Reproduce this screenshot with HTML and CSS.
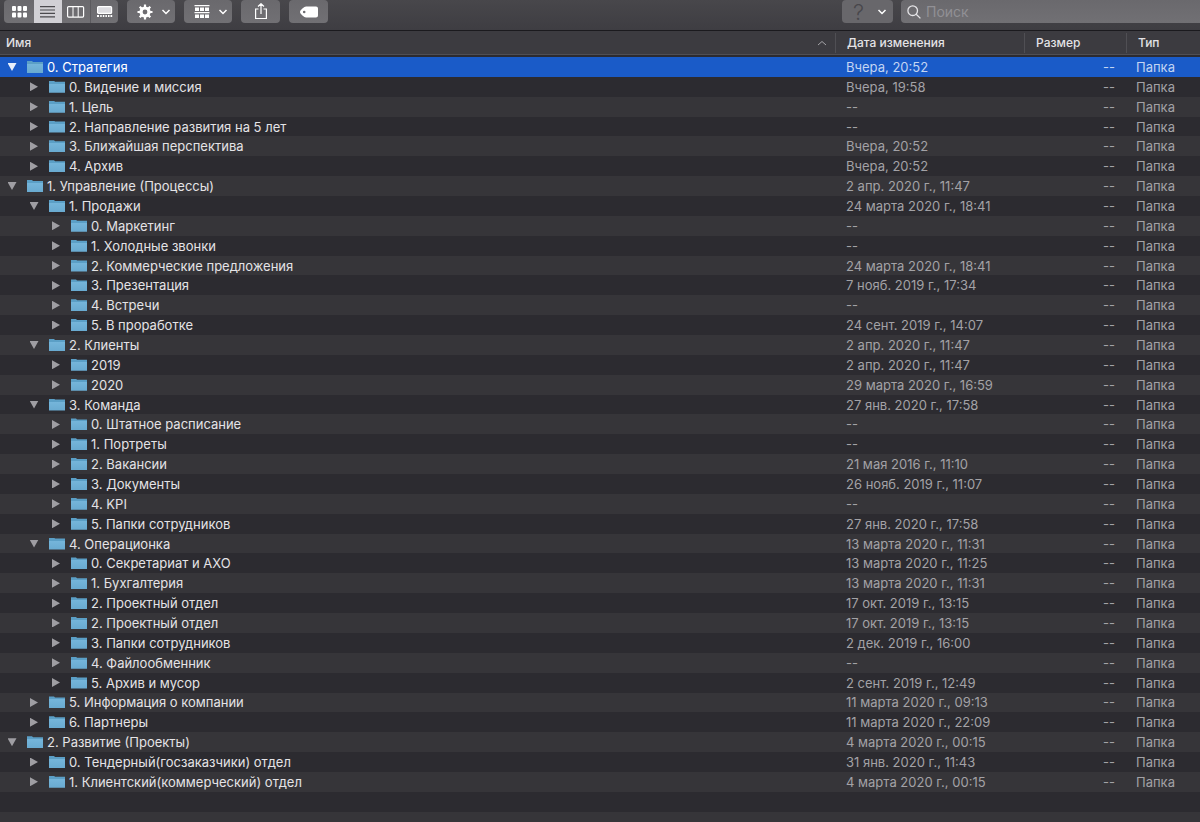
FILE: index.html
```html
<!DOCTYPE html>
<html lang="ru">
<head>
<meta charset="utf-8">
<title>Стратегия</title>
<link rel="stylesheet" href="styles.css">
</head>
<body>
<header class="toolbar">
  <div class="group views">
    <button class="view" aria-label="Значки"><svg width="15" height="12" viewBox="0 0 15 12" fill="#fff"><rect x="0" y="0" width="4" height="5" rx="1"/><rect x="5.500" y="0" width="4" height="5" rx="1"/><rect x="11" y="0" width="4" height="5" rx="1"/><rect x="0" y="6.500" width="4" height="5" rx="1"/><rect x="5.500" y="6.500" width="4" height="5" rx="1"/><rect x="11" y="6.500" width="4" height="5" rx="1"/></svg></button>
    <button class="view active" aria-label="Список" aria-pressed="true"><svg width="16" height="12" viewBox="0 0 16 12" stroke="#4b4a4e" stroke-width="1.200"><path d="M0 .7h15M0 4h15M0 7.400h15M0 10.800h15"/></svg></button>
    <button class="view" aria-label="Колонки"><svg width="18" height="12" viewBox="0 0 18 12" fill="none" stroke="#fff"><rect x=".6" y=".6" width="16" height="10.500" rx="1" stroke-width="1.200"/><path d="M6 1v10M11.200 1v10"/></svg></button>
    <button class="view" aria-label="Галерея"><svg width="16" height="12" viewBox="0 0 16 12" fill="#fff"><rect x=".6" y=".6" width="14" height="6.800" rx="1" fill="#dddce0" stroke="#fff" stroke-width="1.200"/><path d="M0 9h2v2H0zM3.200 9h1.500v2H3.200zM5.800 9h1.500v2H5.800zM8.400 9h1.500v2H8.400zM11 9h1.500v2H11zM13.500 9h1.700v2h-1.700z"/></svg></button>
  </div>
  <button class="group menu" aria-label="Действия"><svg width="16" height="16" viewBox="-8 -8 16 16"><circle r="4" fill="none" stroke="#fff" stroke-width="3.200"/><path d="M0-7.500v3M0 7.500v-3M-7.500 0h3M7.500 0h-3M-5.300-5.300l2.200 2.200M5.300 5.300l-2.200-2.200M-5.300 5.300l2.200-2.200M5.300-5.300l-2.200 2.200" stroke="#fff" stroke-width="2.200"/></svg><svg width="10" height="6" viewBox="0 0 10 6"><path d="M1.500 1l3.500 3.500L8.500 1" class="chevron"/></svg></button>
  <button class="group menu" aria-label="Группировка"><svg width="16" height="16" viewBox="0 0 16 16" fill="#fff"><path d="M.5 1h15v1.200H.5zM.5 8h15v1.200H.5z"/><path d="M1 3.500h4v3.500H1zM6 3.500h4v3.500H6zM11 3.500h4v3.500h-4zM1 10.500h4V14H1zM6 10.500h4V14H6zM11 10.500h4V14h-4z"/></svg><svg width="10" height="6" viewBox="0 0 10 6"><path d="M1.500 1l3.500 3.500L8.500 1" class="chevron"/></svg></button>
  <button class="group single" aria-label="Поделиться"><svg width="14" height="18" viewBox="0 1 14 18" fill="none" stroke="#fff" stroke-width="1.200"><path d="M4.500 7H1.600v9.500h10.800V7H9.500M7 12V2M4 4.500L7 1.700l3 2.800"/></svg></button>
  <button class="group single" aria-label="Теги"><svg width="18" height="12" viewBox="0 0 18 12"><path fill="#fff" fill-rule="evenodd" d="M6 .5h10a2 2 0 0 1 2 2v7a2 2 0 0 1-2 2H6C4.500 11.500 0 8 0 6S4.500.5 6 .5zM4.200 4.700a1.300 1.300 0 1 0 0 2.600 1.300 1.300 0 0 0 0-2.600z"/></svg></button>
  <button class="group menu help" aria-label="Справка"><span class="question">?</span><svg width="10" height="6" viewBox="0 0 10 6"><path d="M1.500 1l3.500 3.500L8.500 1" class="chevron"/></svg></button>
  <label class="search"><svg width="14" height="14" viewBox="0 0 14 14" fill="none" stroke="#e6e5e8" stroke-width="1.300"><circle cx="5.700" cy="5.700" r="4.800"/><path d="M9.200 9.200l4.200 4.200"/></svg><input type="search" placeholder="Поиск" aria-label="Поиск"></label>
</header>
<main class="list">
<table class="files">
<colgroup><col><col class="col-date"><col class="col-size"><col class="col-type"></colgroup>
<thead><tr><th class="sorted" aria-sort="ascending"><div class="head">Имя<svg width="10" height="6" viewBox="0 0 10 6" fill="none" stroke="#a5a4a8"><path d="M1 5l4-3.500L9 5"/></svg></div></th><th><div class="head">Дата изменения</div></th><th><div class="head">Размер</div></th><th><div class="head">Тип</div></th></tr></thead>
<tbody>
<tr class="selected"><td><div class="name"><button class="toggle open" aria-label="Свернуть"></button><i class="folder"></i>0. Стратегия</div></td><td>Вчера, 20:52</td><td>--</td><td>Папка</td></tr>
<tr><td><div class="name l1"><button class="toggle" aria-label="Развернуть"></button><i class="folder"></i>0. Видение и миссия</div></td><td>Вчера, 19:58</td><td>--</td><td>Папка</td></tr>
<tr><td><div class="name l1"><button class="toggle" aria-label="Развернуть"></button><i class="folder"></i>1. Цель</div></td><td>--</td><td>--</td><td>Папка</td></tr>
<tr><td><div class="name l1"><button class="toggle" aria-label="Развернуть"></button><i class="folder"></i>2. Направление развития на 5 лет</div></td><td>--</td><td>--</td><td>Папка</td></tr>
<tr><td><div class="name l1"><button class="toggle" aria-label="Развернуть"></button><i class="folder"></i>3. Ближайшая перспектива</div></td><td>Вчера, 20:52</td><td>--</td><td>Папка</td></tr>
<tr><td><div class="name l1"><button class="toggle" aria-label="Развернуть"></button><i class="folder"></i>4. Архив</div></td><td>Вчера, 20:52</td><td>--</td><td>Папка</td></tr>
<tr><td><div class="name"><button class="toggle open" aria-label="Свернуть"></button><i class="folder"></i>1. Управление (Процессы)</div></td><td>2 апр. 2020 г., 11:47</td><td>--</td><td>Папка</td></tr>
<tr><td><div class="name l1"><button class="toggle open" aria-label="Свернуть"></button><i class="folder"></i>1. Продажи</div></td><td>24 марта 2020 г., 18:41</td><td>--</td><td>Папка</td></tr>
<tr><td><div class="name l2"><button class="toggle" aria-label="Развернуть"></button><i class="folder"></i>0. Маркетинг</div></td><td>--</td><td>--</td><td>Папка</td></tr>
<tr><td><div class="name l2"><button class="toggle" aria-label="Развернуть"></button><i class="folder"></i>1. Холодные звонки</div></td><td>--</td><td>--</td><td>Папка</td></tr>
<tr><td><div class="name l2"><button class="toggle" aria-label="Развернуть"></button><i class="folder"></i>2. Коммерческие предложения</div></td><td>24 марта 2020 г., 18:41</td><td>--</td><td>Папка</td></tr>
<tr><td><div class="name l2"><button class="toggle" aria-label="Развернуть"></button><i class="folder"></i>3. Презентация</div></td><td>7 нояб. 2019 г., 17:34</td><td>--</td><td>Папка</td></tr>
<tr><td><div class="name l2"><button class="toggle" aria-label="Развернуть"></button><i class="folder"></i>4. Встречи</div></td><td>--</td><td>--</td><td>Папка</td></tr>
<tr><td><div class="name l2"><button class="toggle" aria-label="Развернуть"></button><i class="folder"></i>5. В проработке</div></td><td>24 сент. 2019 г., 14:07</td><td>--</td><td>Папка</td></tr>
<tr><td><div class="name l1"><button class="toggle open" aria-label="Свернуть"></button><i class="folder"></i>2. Клиенты</div></td><td>2 апр. 2020 г., 11:47</td><td>--</td><td>Папка</td></tr>
<tr><td><div class="name l2"><button class="toggle" aria-label="Развернуть"></button><i class="folder"></i>2019</div></td><td>2 апр. 2020 г., 11:47</td><td>--</td><td>Папка</td></tr>
<tr><td><div class="name l2"><button class="toggle" aria-label="Развернуть"></button><i class="folder"></i>2020</div></td><td>29 марта 2020 г., 16:59</td><td>--</td><td>Папка</td></tr>
<tr><td><div class="name l1"><button class="toggle open" aria-label="Свернуть"></button><i class="folder"></i>3. Команда</div></td><td>27 янв. 2020 г., 17:58</td><td>--</td><td>Папка</td></tr>
<tr><td><div class="name l2"><button class="toggle" aria-label="Развернуть"></button><i class="folder"></i>0. Штатное расписание</div></td><td>--</td><td>--</td><td>Папка</td></tr>
<tr><td><div class="name l2"><button class="toggle" aria-label="Развернуть"></button><i class="folder"></i>1. Портреты</div></td><td>--</td><td>--</td><td>Папка</td></tr>
<tr><td><div class="name l2"><button class="toggle" aria-label="Развернуть"></button><i class="folder"></i>2. Вакансии</div></td><td>21 мая 2016 г., 11:10</td><td>--</td><td>Папка</td></tr>
<tr><td><div class="name l2"><button class="toggle" aria-label="Развернуть"></button><i class="folder"></i>3. Документы</div></td><td>26 нояб. 2019 г., 11:07</td><td>--</td><td>Папка</td></tr>
<tr><td><div class="name l2"><button class="toggle" aria-label="Развернуть"></button><i class="folder"></i>4. KPI</div></td><td>--</td><td>--</td><td>Папка</td></tr>
<tr><td><div class="name l2"><button class="toggle" aria-label="Развернуть"></button><i class="folder"></i>5. Папки сотрудников</div></td><td>27 янв. 2020 г., 17:58</td><td>--</td><td>Папка</td></tr>
<tr><td><div class="name l1"><button class="toggle open" aria-label="Свернуть"></button><i class="folder"></i>4. Операционка</div></td><td>13 марта 2020 г., 11:31</td><td>--</td><td>Папка</td></tr>
<tr><td><div class="name l2"><button class="toggle" aria-label="Развернуть"></button><i class="folder"></i>0. Секретариат и АХО</div></td><td>13 марта 2020 г., 11:25</td><td>--</td><td>Папка</td></tr>
<tr><td><div class="name l2"><button class="toggle" aria-label="Развернуть"></button><i class="folder"></i>1. Бухгалтерия</div></td><td>13 марта 2020 г., 11:31</td><td>--</td><td>Папка</td></tr>
<tr><td><div class="name l2"><button class="toggle" aria-label="Развернуть"></button><i class="folder"></i>2. Проектный отдел</div></td><td>17 окт. 2019 г., 13:15</td><td>--</td><td>Папка</td></tr>
<tr><td><div class="name l2"><button class="toggle" aria-label="Развернуть"></button><i class="folder"></i>2. Проектный отдел</div></td><td>17 окт. 2019 г., 13:15</td><td>--</td><td>Папка</td></tr>
<tr><td><div class="name l2"><button class="toggle" aria-label="Развернуть"></button><i class="folder"></i>3. Папки сотрудников</div></td><td>2 дек. 2019 г., 16:00</td><td>--</td><td>Папка</td></tr>
<tr><td><div class="name l2"><button class="toggle" aria-label="Развернуть"></button><i class="folder"></i>4. Файлообменник</div></td><td>--</td><td>--</td><td>Папка</td></tr>
<tr><td><div class="name l2"><button class="toggle" aria-label="Развернуть"></button><i class="folder"></i>5. Архив и мусор</div></td><td>2 сент. 2019 г., 12:49</td><td>--</td><td>Папка</td></tr>
<tr><td><div class="name l1"><button class="toggle" aria-label="Развернуть"></button><i class="folder"></i>5. Информация о компании</div></td><td>11 марта 2020 г., 09:13</td><td>--</td><td>Папка</td></tr>
<tr><td><div class="name l1"><button class="toggle" aria-label="Развернуть"></button><i class="folder"></i>6. Партнеры</div></td><td>11 марта 2020 г., 22:09</td><td>--</td><td>Папка</td></tr>
<tr><td><div class="name"><button class="toggle open" aria-label="Свернуть"></button><i class="folder"></i>2. Развитие (Проекты)</div></td><td>4 марта 2020 г., 00:15</td><td>--</td><td>Папка</td></tr>
<tr><td><div class="name l1"><button class="toggle" aria-label="Развернуть"></button><i class="folder"></i>0. Тендерный(госзаказчики) отдел</div></td><td>31 янв. 2020 г., 11:43</td><td>--</td><td>Папка</td></tr>
<tr><td><div class="name l1"><button class="toggle" aria-label="Развернуть"></button><i class="folder"></i>1. Клиентский(коммерческий) отдел</div></td><td>4 марта 2020 г., 00:15</td><td>--</td><td>Папка</td></tr>
<tr class="blank"><td colspan="4"><div class="name empty"></div></td></tr>
</tbody>
</table>
</main>
<footer class="tail"></footer>
</body>
</html>
```
FILE: styles.css
```css
* { box-sizing: border-box; }

body {
  margin: 0;
  min-height: 100vh;
  display: flex;
  flex-direction: column;
  background: #2c2b30;
  color: #e4e3e6;
  font: 13px/18px Inter, "Noto Sans", sans-serif;
}

button {
  border: 0;
  padding: 0;
  background: none;
  color: inherit;
  font: inherit;
}

/* Toolbar */
.toolbar {
  display: flex;
  align-items: flex-start;
  gap: 9px;
  height: 31px;
  padding-left: 4px;
  background: linear-gradient(#48474b, #3e3d42);
  border-bottom: 1px solid #1b1a1e;
}

.group {
  display: flex;
  align-items: center;
  justify-content: center;
  height: 23px;
  border-radius: 4px;
  background: linear-gradient(#6a696d, #717074);
}

.views { overflow: hidden; }

.view {
  display: flex;
  align-items: center;
  justify-content: center;
  width: 28px;
  height: 23px;
}

.view:first-child { width: 30px; }
.view + .view { border-left: 1px solid #5b5a5e; }
.view.active, .view.active + .view { border-left: 0; }
.view.active { background: #d1d0d5; }

.menu { width: 48px; padding-left: 5px; gap: 8px; }

.single { width: 39px; }

.chevron { fill: none; stroke: #fff; stroke-width: 1.5px; }

.help { width: 51px; margin-left: auto; gap: 13px; background: #68676b; }

.question { color: #48474c; font-size: 22px; font-weight: 300; }

.search {
  display: flex;
  align-items: center;
  gap: 5px;
  width: 25%;
  height: 23px;
  margin-left: -1px;
  padding-left: 6px;
  border-radius: 4px 0 0 4px;
  background: linear-gradient(#6a696d, #717074);
}

.search input {
  flex: 1;
  min-width: 0;
  border: 0;
  padding: 0;
  outline: 0;
  background: none;
  color: #fff;
  font: inherit;
  font-size: 14px;
}

.search input::placeholder { color: #919095; }

/* File list */
.list { flex: 1; display: grid; }

.files {
  width: 100%;
  height: 100%;
  table-layout: fixed;
  border-collapse: separate;
  border-spacing: 0;
}

.col-date { width: 189px; }
.col-size { width: 102px; }
.col-type { width: 74px; }

th {
  height: 26px;
  padding: 0 0 2px;
  text-align: left;
  font-size: 12px;
  font-weight: 500;
  background: linear-gradient(#3c3b40 23px, #504f54 23px, #504f54 24px, #2c2b30 24px);
}

.head {
  display: flex;
  align-items: center;
  justify-content: space-between;
  height: 20px;
  padding: 0 8px 0 11px;
  border-left: 1px solid #504f54;
}

.sorted .head { padding-left: 6px; border-left: 0; }

tbody tr:nth-child(odd), .tail { background: #363539; }

td {
  padding: 0 10px;
  white-space: nowrap;
  color: #a3a2a6;
  line-height: 18px;
}

td:first-child { padding: 0 0 0 4px; color: #e4e3e6; }
td:nth-child(2) { padding-left: 11px; }
td:nth-child(3) { padding-right: 11px; text-align: right; }

tbody tr.selected:nth-child(n) { background: #1a5bc8; }
.selected td { color: #c3d5f3; }
.selected td:first-child { color: #fff; }

.name { display: flex; align-items: center; }
.l1 { padding-left: 22px; }
.l2 { padding-left: 44px; }
.empty { height: 18px; }

.toggle {
  display: grid;
  place-items: center;
  width: 16px;
  height: 16px;
  margin-right: 7px;
}

.toggle::before {
  content: "";
  width: 8px;
  height: 9px;
  background: #9f9ea3;
  clip-path: polygon(0 0, 100% 50%, 0 100%);
}

.toggle.open::before {
  width: 9px;
  height: 8px;
  clip-path: polygon(0 0, 100% 0, 50% 100%);
}

.selected .toggle::before { background: #e8effb; }

.folder {
  width: 16px;
  height: 12px;
  margin-right: 4px;
  background: linear-gradient(#5b9fc6 3px, #75b5da 3px, #69aad0);
  clip-path: polygon(0 0, 5px 0, 6px 1px, 16px 1px, 16px 12px, 0 12px);
}

.tail { height: 10px; }
```
